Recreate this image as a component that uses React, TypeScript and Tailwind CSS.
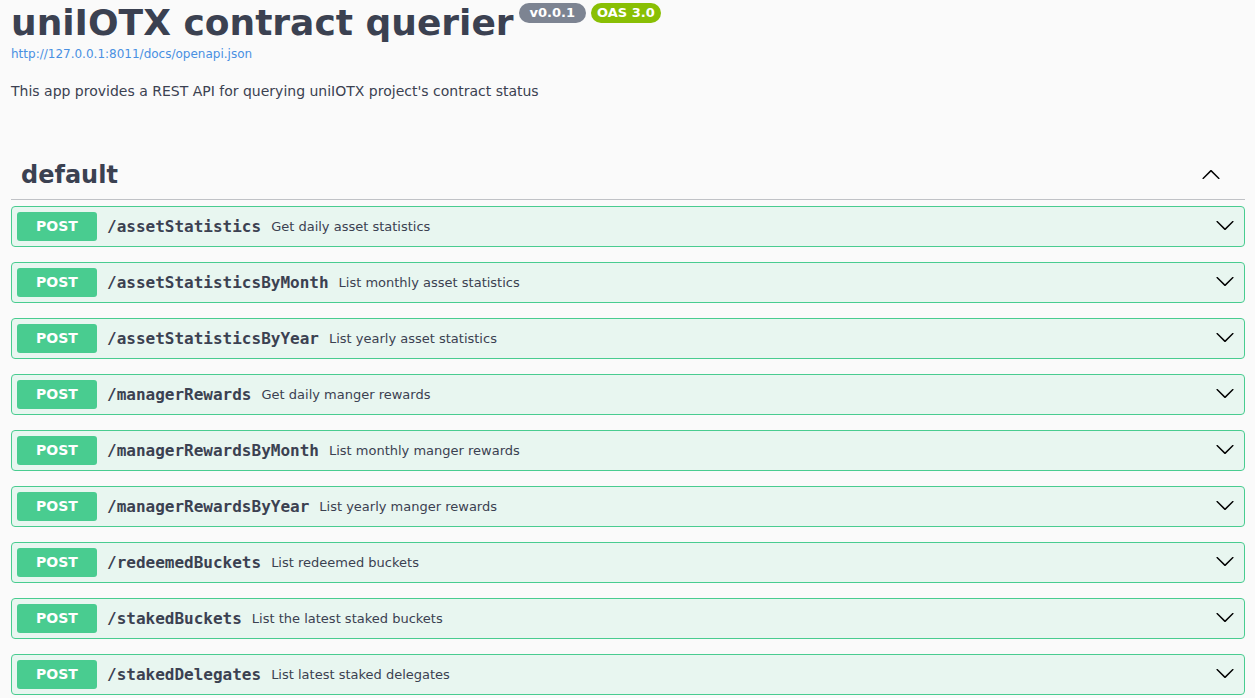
import React from "react";

const ops = [
  { path: "/assetStatistics", summary: "Get daily asset statistics" },
  { path: "/assetStatisticsByMonth", summary: "List monthly asset statistics" },
  { path: "/assetStatisticsByYear", summary: "List yearly asset statistics" },
  { path: "/managerRewards", summary: "Get daily manger rewards" },
  { path: "/managerRewardsByMonth", summary: "List monthly manger rewards" },
  { path: "/managerRewardsByYear", summary: "List yearly manger rewards" },
  { path: "/redeemedBuckets", summary: "List redeemed buckets" },
  { path: "/stakedBuckets", summary: "List the latest staked buckets" },
  { path: "/stakedDelegates", summary: "List latest staked delegates" },
];

const Arrow = ({ up = false }: { up?: boolean }) => (
  <svg
    width="20"
    height="20"
    viewBox="0 0 20 20"
    className={up ? "rotate-180" : ""}
    fill="#000"
  >
    <path d="M17.418 6.109c.272-.268.709-.268.979 0s.271.701 0 .969l-7.908 7.83c-.27.268-.707.268-.979 0l-7.908-7.83c-.27-.268-.27-.701 0-.969.271-.268.709-.268.979 0L10 13.25l7.418-7.141z" />
  </svg>
);

const App = () => {
  return (
    <div
      className="min-h-[698px] bg-[#fafafa] pl-[11px] pr-[10px] text-[#3b4151]"
      style={{ fontFamily: '"DejaVu Sans", sans-serif' }}
    >
      {/* info */}
      <div className="flex items-start">
        <h2 className="m-0 pt-[2px] text-[36px] font-bold leading-[42px]">uniIOTX contract querier</h2>
        <span className="ml-[5px] mt-[3px] h-[20px] rounded-full bg-[#7d8492] px-[11px] text-[13px] font-bold leading-[20px] text-white">
          v0.0.1
        </span>
        <span className="ml-[5px] mt-[3px] h-[20px] rounded-full bg-[#89bf04] px-[6px] text-[13px] font-bold leading-[20px] text-white">
          OAS 3.0
        </span>
      </div>
      <a className="mt-[3px] block text-[12px] leading-[14px] text-[#4990e2]">
        http://127.0.0.1:8011/docs/openapi.json
      </a>
      <p className="mt-[22px] text-[14px] leading-[16px]">
        This app provides a REST API for querying uniIOTX project's contract status
      </p>

      {/* tag */}
      <div className="mt-[62px] mb-[6px] flex items-center border-b border-[#3b4151]/30 pl-[10px] pb-[10px]">
        <h3 className="flex-1 text-[24px] font-bold leading-[28px]">default</h3>
        <div className="mr-[24px] -mt-[1px]">
          <Arrow up />
        </div>
      </div>

      <div className="flex flex-col gap-[15px]">
        {ops.map((op) => (
          <div
            key={op.path}
            className="flex items-center rounded-[4px] border border-[#49cc90] bg-[#e8f6f0] p-[5px]"
          >
            <span className="flex h-[29px] w-[80px] items-center justify-center rounded-[3px] bg-[#49cc90] text-[14px] font-bold text-white">
              POST
            </span>
            <span
              className="ml-[10px] text-[16px] font-bold"
              style={{ fontFamily: '"DejaVu Sans Mono", monospace' }}
            >
              {op.path}
            </span>
            <span className="ml-[10px] flex-1 text-[13px]">{op.summary}</span>
            <div className="mr-[4px] -mt-[4px]">
              <Arrow />
            </div>
          </div>
        ))}
      </div>
    </div>
  );
};

export default App;
